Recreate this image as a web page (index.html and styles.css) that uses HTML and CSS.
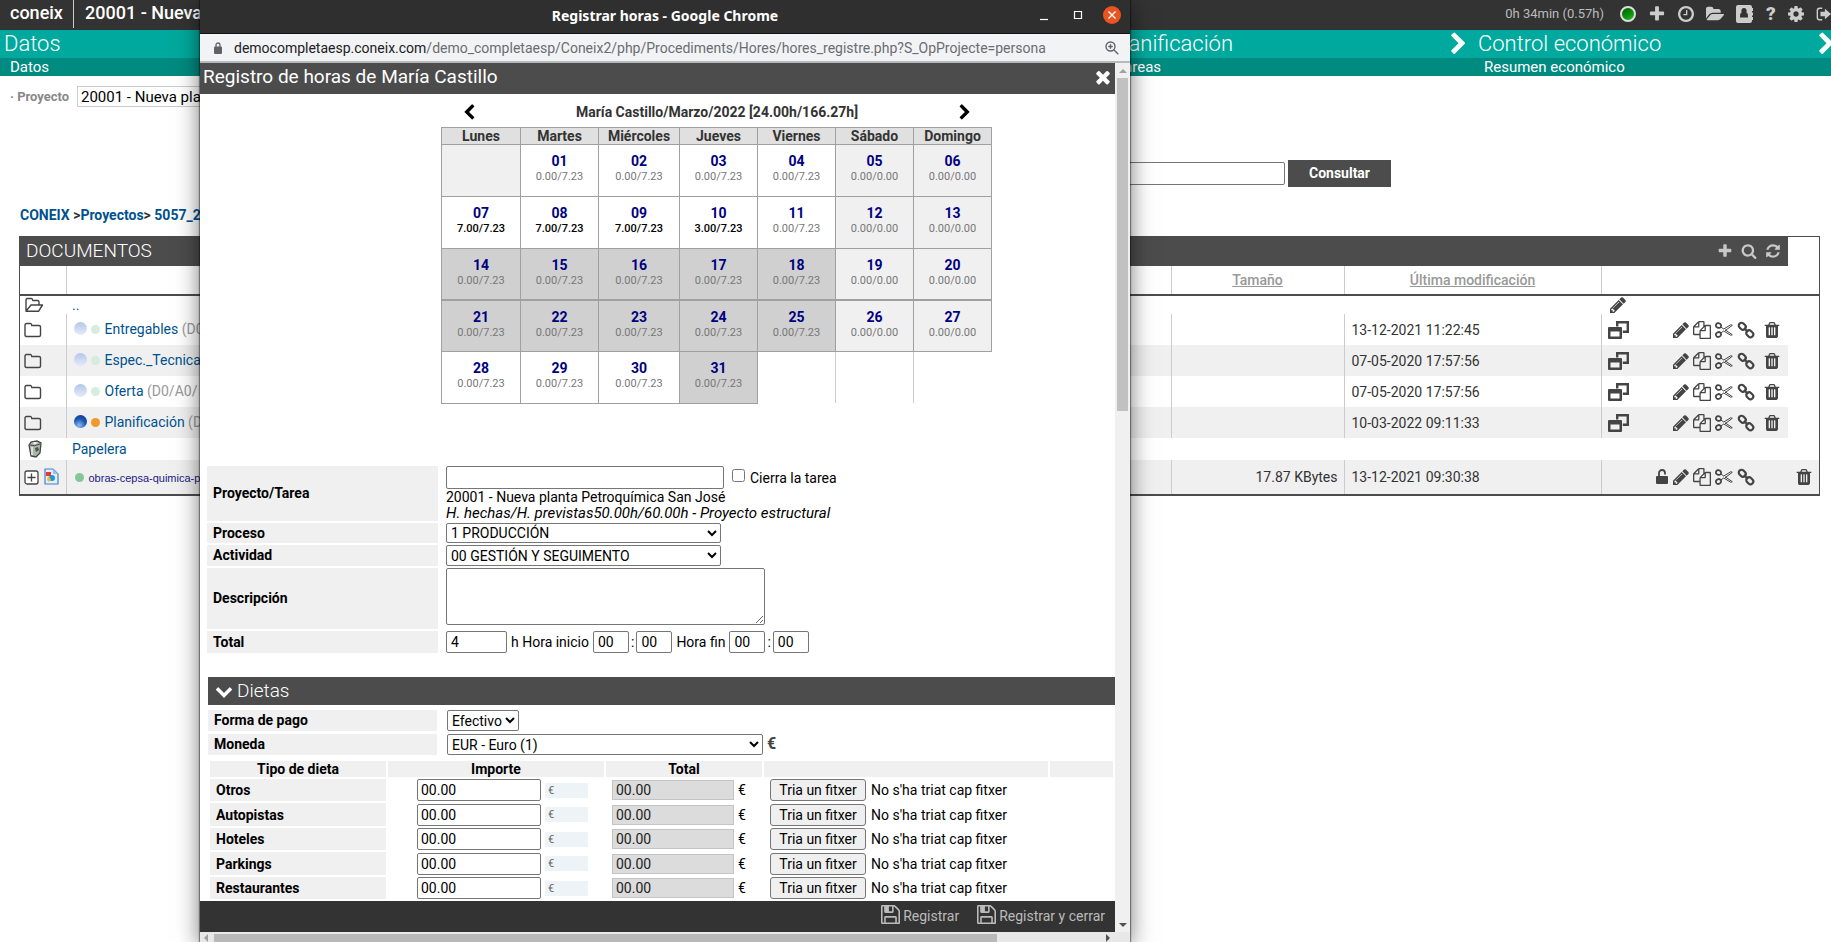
FILE: index.html
```html
<!DOCTYPE html>
<html lang="es">
<head>
<meta charset="utf-8">
<title>coneix - Registro de horas</title>
<link rel="stylesheet" href="styles.css">
</head>
<body>
<svg class="sprite" aria-hidden="true">
  <symbol id="plus" viewBox="0 0 1792 1792"><path d="M1600 736v192q0 40-28 68t-68 28h-416v416q0 40-28 68t-68 28h-192q-40 0-68-28t-28-68v-416h-416q-40 0-68-28t-28-68v-192q0-40 28-68t68-28h416v-416q0-40 28-68t68-28h192q40 0 68 28t28 68v416h416q40 0 68 28t28 68z"/></symbol>
  <symbol id="right" viewBox="256 0 1200 1792"><path d="M1363 877l-742 742q-19 19-45 19t-45-19l-166-166q-19-19-19-45t19-45l531-531-531-531q-19-19-19-45t19-45l166-166q19-19 45-19t45 19l742 742q19 19 19 45t-19 45z"/></symbol>
  <symbol id="left" viewBox="336 0 1200 1792"><path d="M1427 301l-531 531 531 531q19 19 19 45t-19 45l-166 166q-19 19-45 19t-45-19l-742-742q-19-19-19-45t19-45l742-742q19-19 45-19t45 19l166 166q19 19 19 45t-19 45z"/></symbol>
  <symbol id="down" viewBox="0 0 1792 1792"><path d="M1683 808l-742 741q-19 19-45 19t-45-19l-742-741q-19-19-19-45.500t19-45.500l166-165q19-19 45-19t45 19l531 531 531-531q19-19 45-19t45 19l166 165q19 19 19 45.500t-19 45.500z"/></symbol>
  <symbol id="times" viewBox="192 192 1408 1408"><path d="M1490 1322q0 40-28 68l-136 136q-28 28-68 28t-68-28l-294-294-294 294q-28 28-68 28t-68-28l-136-136q-28-28-28-68t28-68l294-294-294-294q-28-28-28-68t28-68l136-136q28-28 68-28t68 28l294 294 294-294q28-28 68-28t68 28l136 136q28 28 28 68t-28 68l-294 294 294 294q28 28 28 68z"/></symbol>
  <symbol id="search" viewBox="0 0 1792 1792"><path d="M1216 832q0-185-131.500-316.500t-316.500-131.500-316.500 131.500-131.500 316.500 131.500 316.500 316.500 131.500 316.500-131.500 131.500-316.500zm512 832q0 52-38 90t-90 38q-54 0-90-38l-343-342q-179 124-399 124-143 0-273.500-55.500t-225-150-150-225-55.500-273.500 55.500-273.500 150-225 225-150 273.500-55.500 273.500 55.500 225 150 150 225 55.500 273.500q0 220-124 399l343 343q37 37 37 90z"/></symbol>
  <symbol id="refresh" viewBox="0 0 1792 1792"><path d="M1639 1056q0 5-1 7-64 268-268 434.500t-478 166.500q-146 0-282.500-55t-243.500-157l-129 129q-19 19-45 19t-45-19-19-45v-448q0-26 19-45t45-19h448q26 0 45 19t19 45-19 45l-137 137q71 66 161 102t187 36q134 0 250-65t186-179q11-17 53-117 8-23 30-23h192q13 0 22.500 9.500t9.500 22.500zm25-800v448q0 26-19 45t-45 19h-448q-26 0-45-19t-19-45 19-45l138-138q-148-137-349-137-134 0-250 65t-186 179q-11 17-53 117-8 23-30 23h-199q-13 0-22.500-9.500t-9.500-22.500v-7q65-268 270-434.500t480-166.500q146 0 284 55.500t245 156.500l130-129q19-19 45-19t45 19 19 45z"/></symbol>
  <symbol id="pencil" viewBox="128 128 1536 1536"><path d="M491 1536l91-91-235-235-91 91v107h128v128h107zm523-928q0-22-22-22-10 0-17 7l-542 542q-7 7-7 17 0 22 22 22 10 0 17-7l542-542q7-7 7-17zm-54-192l416 416-832 832h-416v-416zm683 96q0 53-37 90l-166 166-416-416 166-165q36-38 90-38 53 0 91 38l235 234q37 39 37 91z"/></symbol>
  <symbol id="trash" viewBox="128 128 1536 1536"><path d="M704 1376v-704q0-14-9-23t-23-9h-64q-14 0-23 9t-9 23v704q0 14 9 23t23 9h64q14 0 23-9t9-23zm256 0v-704q0-14-9-23t-23-9h-64q-14 0-23 9t-9 23v704q0 14 9 23t23 9h64q14 0 23-9t9-23zm256 0v-704q0-14-9-23t-23-9h-64q-14 0-23 9t-9 23v704q0 14 9 23t23 9h64q14 0 23-9t9-23zm-544-992h448l-48-117q-7-9-17-11h-317q-10 2-17 11zm928 32v64q0 14-9 23t-23 9h-96v948q0 83-47 143.500t-113 60.500h-832q-66 0-113-58.500t-47-141.500v-952h-96q-14 0-23-9t-9-23v-64q0-14 9-23t23-9h309l70-167q15-37 54-63t79-26h320q40 0 79 26t54 63l70 167h309q14 0 23 9t9 23z"/></symbol>
  <symbol id="cog" viewBox="128 128 1536 1536"><path d="M1152 896q0-106-75-181t-181-75-181 75-75 181 75 181 181 75 181-75 75-181zm512-109v222q0 12-8 23t-20 13l-185 28q-19 54-39 91 35 50 107 138 10 12 10 25t-9 23q-27 37-99 108t-94 71q-12 0-26-9l-138-108q-44 23-91 38-16 136-29 186-7 28-36 28h-222q-14 0-24.500-8.500t-11.500-21.500l-28-184q-49-16-90-37l-141 107q-10 9-25 9-14 0-25-11-126-114-165-168-7-10-7-23 0-12 8-23 15-21 51-66.500t54-70.500q-27-50-41-99l-183-27q-13-2-21-12.500t-8-23.500v-222q0-12 8-23t19-13l186-28q14-46 39-92-40-57-107-138-10-12-10-24 0-10 9-23 26-36 98.500-107.500t94.500-71.500q13 0 26 10l138 107q44-23 91-38 16-136 29-186 7-28 36-28h222q14 0 24.500 8.500t11.500 21.500l28 184q49 16 90 37l142-107q9-9 24-9 13 0 25 10 129 119 165 170 7 8 7 22 0 12-8 23-15 21-51 66.500t-54 70.500q26 50 41 98l183 28q13 2 21 12.500t8 23.500z"/></symbol>
  <symbol id="clock" viewBox="128 128 1536 1536"><path d="M1024 544v448q0 14-9 23t-23 9h-320q-14 0-23-9t-9-23v-64q0-14 9-23t23-9h224v-352q0-14 9-23t23-9h64q14 0 23 9t9 23zm416 352q0-148-73-273t-198-198-273-73-273 73-198 198-73 273 73 273 198 198 273 73 273-73 198-198 73-273zm224 0q0 209-103 385.500t-279.500 279.500-385.500 103-385.500-103-279.500-279.500-103-385.500 103-385.500 279.500-279.500 385.500-103 385.500 103 279.500 279.500 103 385.500z"/></symbol>
  <symbol id="open" viewBox="0 128 1880 1536"><path d="M1879 952q0 31-31 66l-336 396q-43 51-120.500 86.500t-143.500 35.500h-1088q-34 0-60.500-13t-26.500-43q0-31 31-66l336-396q43-51 120.500-86.500t143.500-35.500h1088q34 0 60.500 13t26.500 43zm-343-344v160h-832q-94 0-197 47.500t-164 119.500l-337 396-6 6v-985q0-92 66-158t158-66h320q92 0 158 66t66 158v32h544q92 0 158 66t66 158z"/></symbol>
  <symbol id="copy" viewBox="0 0 1792 1792"><path d="M1696 384q40 0 68 28t28 68v1216q0 40-28 68t-68 28h-960q-40 0-68-28t-28-68v-288h-544q-40 0-68-28t-28-68v-672q0-40 20-88t48-76l408-408q28-28 76-48t88-20h416q40 0 68 28t28 68v328q68-40 128-40h416zm-544 213l-299 299h299v-299zm-640-384l-299 299h299v-299zm196 647l316-316v-416h-384v416q0 40-28 68t-68 28h-416v640h512v-256q0-40 20-88t48-76zm956 804v-1152h-384v416q0 40-28 68t-68 28h-416v640h896z"/></symbol>
  <symbol id="save" viewBox="128 128 1536 1536"><path d="M512 1536h768v-384h-768v384zm896 0h128v-896q0-14-10-38.500t-20-34.500l-281-281q-10-10-34-20t-39-10v416q0 40-28 68t-68 28h-576q-40 0-68-28t-28-68v-416h-128v1280h128v-416q0-40 28-68t68-28h832q40 0 68 28t28 68v416zm-384-928v-320q0-13-9.500-22.500t-22.500-9.500h-192q-13 0-22.500 9.500t-9.500 22.500v320q0 13 9.500 22.500t22.500 9.500h192q13 0 22.500-9.500t9.500-22.500zm640 32v928q0 40-28 68t-68 28h-1344q-40 0-68-28t-28-68v-1344q0-40 28-68t68-28h928q40 0 88 20t76 48l280 280q28 28 48 76t20 88z"/></symbol>
  <symbol id="cut" viewBox="0 0 18 18"><g fill="none" stroke="currentColor"><ellipse cx="3.500" cy="4.500" rx="2.600" ry="2.300" stroke-width="1.700" transform="rotate(30 3.500 4.500)"/><ellipse cx="3.500" cy="13.500" rx="2.600" ry="2.300" stroke-width="1.700" transform="rotate(-30 3.500 13.500)"/><path d="M5.800 6l3 2 7-4.300 1.500.6-7.300 5.500M5.800 12l3-2M10 8.700l7.300 5-1.500.6-7-4.300" stroke-width="1"/></g></symbol>
  <symbol id="link" viewBox="0 0 18 18"><g fill="none" stroke="currentColor" stroke-width="2.200"><rect x="1.500" y="2.500" width="7.500" height="5.500" rx="2.700" transform="rotate(45 5.250 5.250)"/><rect x="9" y="10" width="7.500" height="5.500" rx="2.700" transform="rotate(45 12.750 12.750)"/><path d="M7 7l4 4"/></g></symbol>
  <symbol id="windows" viewBox="0 0 21 18"><path d="M9.200 5.500V1.200h10.600v9.600h-5" fill="none" stroke="currentColor" stroke-width="2.400"/><path fill-rule="evenodd" d="M1 6h12q1 0 1 1v10q0 1-1 1H1q-1 0-1-1V7q0-1 1-1zM2.500 10.500v5h9v-5z"/></symbol>
  <symbol id="unlock" viewBox="0 0 14 18"><path d="M2 8h10q1 0 1 1v6q0 1-1 1H2q-1 0-1-1V9q0-1 1-1z"/><path d="M4 9V5a3 3 0 0 1 6 0v1.500" fill="none" stroke="currentColor" stroke-width="1.800"/></symbol>
  <symbol id="folder" viewBox="0 0 18 16"><path d="M1 3q0-1.500 1.500-1.500h4q1 0 1.300 2H15Q16.500 3.500 16.500 5v8q0 1.500-1.500 1.500H2.500Q1 14.500 1 13z" fill="none" stroke="currentColor" stroke-width="1.400"/></symbol>
  <symbol id="folderopen" viewBox="0 0 20 16"><path d="M2 14V3q0-1.500 1.500-1.500h4q1 0 1.300 2h4.700Q15 3.500 15 5v2.500M2 14.300h12.500l4-6.300H7z" fill="none" stroke="currentColor" stroke-width="1.400" stroke-linejoin="round"/></symbol>
  <symbol id="book" viewBox="0 0 18 18"><path fill-rule="evenodd" d="M2 0h12q2 0 2 2v1h1v3h-1v1.500h1v3h-1V12h1v3h-1v1q0 2-2 2H2q-2 0-2-2V2q0-2 2-2zm6 3a2.600 2.800 0 0 0-2.300 4.300Q4 8 4 11v1.500h8V11q0-3-1.700-3.700A2.600 2.800 0 0 0 8 3z"/></symbol>
  <symbol id="exit" viewBox="0 0 18 16"><path d="M7 1.500H4Q1.500 1.500 1.500 4v8q0 2.500 2.500 2.500h3" fill="none" stroke="currentColor" stroke-width="1.600"/><path d="M5 5.500h5V2l7 6-7 6v-3.500H5z"/></symbol>
</svg>

<div class="app">
  <header class="topbar">
    <a class="brand" href="#">coneix</a>
    <h1 class="project">20001 - Nueva</h1>
    <div class="tools">
      <span class="clocked">0h 34min (0.57h)</span>
      <span class="light"></span>
      <a href="#" aria-label="Añadir"><svg class="i18"><use href="#plus"/></svg></a>
      <a href="#" aria-label="Horas"><svg class="i16"><use href="#clock"/></svg></a>
      <a href="#" aria-label="Carpetas"><svg class="i18"><use href="#open"/></svg></a>
      <a href="#" aria-label="Contactos"><svg class="i18"><use href="#book"/></svg></a>
      <a href="#" class="help">?</a>
      <a href="#" aria-label="Ajustes"><svg class="i16"><use href="#cog"/></svg></a>
      <a href="#" aria-label="Salir"><svg class="i16"><use href="#exit"/></svg></a>
    </div>
  </header>

  <nav class="steps">
    <div class="step first"><a class="phase" href="#">Datos</a><a class="sub" href="#">Datos</a></div>
    <div class="step"><span class="phase"></span><span class="sub"></span></div>
    <div class="step"><span class="phase"></span><span class="sub"></span></div>
    <div class="step"><a class="phase" href="#">Planificación<svg class="next"><use href="#right"/></svg></a><a class="sub" href="#">Tareas</a></div>
    <div class="step"><a class="phase" href="#">Control económico<svg class="next"><use href="#right"/></svg></a><a class="sub" href="#">Resumen económico</a></div>
  </nav>

  <main class="page">
    <div class="project-row">
      <label for="proj">· Proyecto</label>
      <input id="proj" value="20001 - Nueva planta">
    </div>
    <div class="query">
      <input aria-label="Buscar"><button>Consultar</button>
    </div>
    <div class="crumbs"><a href="#">CONEIX</a> &gt;<a href="#">Proyectos</a>&gt; <a href="#">5057_2</a></div>

    <section class="docs">
      <div class="docs-head">
        <h2>DOCUMENTOS</h2>
        <a href="#" aria-label="Añadir"><svg class="i16"><use href="#plus"/></svg></a>
        <a href="#" aria-label="Buscar"><svg class="i16"><use href="#search"/></svg></a>
        <a href="#" aria-label="Refrescar"><svg class="i16"><use href="#refresh"/></svg></a>
      </div>
      <table class="files">
        <colgroup><col class="c-icon"><col><col class="c-size"><col class="c-date"><col class="c-act"><col class="c-del"></colgroup>
        <thead><tr><th></th><th></th><th><a href="#">Tamaño</a></th><th><a href="#">Última modificación</a></th><th></th><th class="off"></th></tr></thead>
        <tbody>
          <tr class="up"><td><svg class="fo"><use href="#folderopen"/></svg></td><td><a href="#">..</a></td><td></td><td></td><td><svg class="i16 only"><use href="#pencil"/></svg></td><td></td></tr>
          <tr class="dir"><td><svg class="fd"><use href="#folder"/></svg></td><td><i class="ball"></i><i class="dot"></i><a href="#">Entregables</a> (D0/A0/</td><td></td><td>13-12-2021 11:22:45</td><td><div class="acts"><svg class="win"><use href="#windows"/></svg><svg class="i16"><use href="#pencil"/></svg><svg class="i18"><use href="#copy"/></svg><svg class="i18"><use href="#cut"/></svg><svg class="i18"><use href="#link"/></svg><svg class="i16 del"><use href="#trash"/></svg></div></td><td class="off"></td></tr>
          <tr class="dir alt"><td><svg class="fd"><use href="#folder"/></svg></td><td><i class="ball"></i><i class="dot"></i><a href="#">Espec._Tecnicas</a></td><td></td><td>07-05-2020 17:57:56</td><td><div class="acts"><svg class="win"><use href="#windows"/></svg><svg class="i16"><use href="#pencil"/></svg><svg class="i18"><use href="#copy"/></svg><svg class="i18"><use href="#cut"/></svg><svg class="i18"><use href="#link"/></svg><svg class="i16 del"><use href="#trash"/></svg></div></td><td class="off"></td></tr>
          <tr class="dir"><td><svg class="fd"><use href="#folder"/></svg></td><td><i class="ball"></i><i class="dot"></i><a href="#">Oferta</a> (D0/A0/</td><td></td><td>07-05-2020 17:57:56</td><td><div class="acts"><svg class="win"><use href="#windows"/></svg><svg class="i16"><use href="#pencil"/></svg><svg class="i18"><use href="#copy"/></svg><svg class="i18"><use href="#cut"/></svg><svg class="i18"><use href="#link"/></svg><svg class="i16 del"><use href="#trash"/></svg></div></td><td class="off"></td></tr>
          <tr class="dir alt"><td><svg class="fd"><use href="#folder"/></svg></td><td><i class="ball on"></i><i class="dot warn"></i><a href="#">Planificación</a> (D0/A0/</td><td></td><td>10-03-2022 09:11:33</td><td><div class="acts"><svg class="win"><use href="#windows"/></svg><svg class="i16"><use href="#pencil"/></svg><svg class="i18"><use href="#copy"/></svg><svg class="i18"><use href="#cut"/></svg><svg class="i18"><use href="#link"/></svg><svg class="i16 del"><use href="#trash"/></svg></div></td><td class="off"></td></tr>
          <tr class="bin"><td><svg class="binicon" viewBox="0 0 16 18"><path d="M2 5l2-3 6-1 4 2-1 10-4 4-5-1z" fill="#aab5ab" stroke="#444" stroke-width="1.300"/><path d="M3 5q4 2 10-1" stroke="#444" fill="none"/><path d="M5 3l3-1 3 1-3 1z" fill="#fff"/><path d="M8 8l3-1 1 3-3 2z" fill="#3f5a49"/><path d="M5 7v8" stroke="#eee" stroke-width="1.500"/></svg></td><td><a href="#">Papelera</a></td><td></td><td></td><td></td><td></td></tr>
          <tr class="file alt"><td><svg class="fileicons" viewBox="0 0 36 18"><rect x="1" y="3" width="13" height="13" rx="2" fill="#fff" stroke="#444" stroke-width="1.300"/><path d="M7.500 5.500v8M3.500 9.500h8" stroke="#444" stroke-width="1.300"/><path d="M21 1h8l5 5v10H21z" fill="#e3eefc" stroke="#4a7fc8" stroke-width="1.200"/><path d="M29 1v5h5" fill="#9cc0ee"/><path d="M22 4h5v4h-5z" fill="#e33"/><circle cx="28" cy="10" r="3" fill="#1899d6"/><path d="M24 8l3 3-2 3-2-2z" fill="#f4b82a"/></svg></td><td><i class="dot good"></i><a class="fname" href="#">obras-cepsa-quimica-pa</a></td><td class="num">17.87 KBytes</td><td>13-12-2021 09:30:38</td><td><div class="acts"><svg class="lock"><use href="#unlock"/></svg><svg class="i16"><use href="#pencil"/></svg><svg class="i18"><use href="#copy"/></svg><svg class="i18"><use href="#cut"/></svg><svg class="i18"><use href="#link"/></svg></div></td><td><svg class="i16"><use href="#trash"/></svg></td></tr>
        </tbody>
      </table>
    </section>
  </main>
</div>

<section class="window" aria-label="Registrar horas">
  <header class="titlebar">
    <span class="wtitle">Registrar horas - Google Chrome</span>
    <div class="wbtns">
      <button aria-label="Minimizar"><svg viewBox="0 0 18 18"><path d="M5 13.500h8" stroke="#fff" stroke-width="1.200"/></svg></button>
      <button aria-label="Maximizar"><svg viewBox="0 0 18 18"><path d="M5.500 5.500h7v7h-7z" fill="none" stroke="#fff" stroke-width="1.200"/></svg></button>
      <button aria-label="Cerrar ventana"><svg viewBox="0 0 18 18"><circle cx="9" cy="9" r="9" fill="#e95420"/><path d="M5.500 5.500l7 7m0-7l-7 7" stroke="#fff" stroke-width="1.400"/></svg></button>
    </div>
  </header>
  <div class="urlbar">
    <svg class="padlock" viewBox="0 0 10 12"><rect x="1" y="4.500" width="8" height="7.500" rx="1" fill="#5f6368"/><path d="M3 5V3a2 2 0 0 1 4 0v2" fill="none" stroke="#5f6368" stroke-width="1.300"/></svg>
    <span class="url"><b>democompletaesp.coneix.com</b>/demo_completaesp/Coneix2/php/Procediments/Hores/hores_registre.php?S_OpProjecte=persona</span>
    <svg class="lens" viewBox="0 0 14 14"><g fill="none" stroke="#5f6368" stroke-width="1.400"><circle cx="5.500" cy="5.500" r="4.500"/><path d="M9 9l4.300 4.300M3.300 5.500h4.400M5.500 3.300v4.400"/></g></svg>
  </div>

  <div class="view">
    <div class="content">
      <div class="dlg-head"><h2>Registro de horas de María Castillo</h2><button aria-label="Cerrar"><svg><use href="#times"/></svg></button></div>
      <div class="scroller">
        <div class="month">
          <button aria-label="Mes anterior"><svg><use href="#left"/></svg></button>
          <span>María Castillo/Marzo/2022 [24.00h/166.27h]</span>
          <button aria-label="Mes siguiente"><svg><use href="#right"/></svg></button>
        </div>
        <table class="cal">
          <thead><tr><th class="mon">Lunes</th><th>Martes</th><th class="wide">Miércoles</th><th>Jueves</th><th>Viernes</th><th>Sábado</th><th>Domingo</th></tr></thead>
          <tbody>
            <tr><td class="we"></td><td><a href="#">01</a>0.00/7.23</td><td><a href="#">02</a>0.00/7.23</td><td><a href="#">03</a>0.00/7.23</td><td><a href="#">04</a>0.00/7.23</td><td class="we"><a href="#">05</a>0.00/0.00</td><td class="we"><a href="#">06</a>0.00/0.00</td></tr>
            <tr><td class="done"><a href="#">07</a>7.00/7.23</td><td class="done"><a href="#">08</a>7.00/7.23</td><td class="done"><a href="#">09</a>7.00/7.23</td><td class="done"><a href="#">10</a>3.00/7.23</td><td><a href="#">11</a>0.00/7.23</td><td class="we"><a href="#">12</a>0.00/0.00</td><td class="we"><a href="#">13</a>0.00/0.00</td></tr>
            <tr class="mid"><td class="off"><a href="#">14</a>0.00/7.23</td><td class="off"><a href="#">15</a>0.00/7.23</td><td class="off"><a href="#">16</a>0.00/7.23</td><td class="off"><a href="#">17</a>0.00/7.23</td><td class="off"><a href="#">18</a>0.00/7.23</td><td class="we"><a href="#">19</a>0.00/0.00</td><td class="we"><a href="#">20</a>0.00/0.00</td></tr>
            <tr><td class="off"><a href="#">21</a>0.00/7.23</td><td class="off"><a href="#">22</a>0.00/7.23</td><td class="off"><a href="#">23</a>0.00/7.23</td><td class="off"><a href="#">24</a>0.00/7.23</td><td class="off"><a href="#">25</a>0.00/7.23</td><td class="we"><a href="#">26</a>0.00/0.00</td><td class="we"><a href="#">27</a>0.00/0.00</td></tr>
            <tr><td><a href="#">28</a>0.00/7.23</td><td><a href="#">29</a>0.00/7.23</td><td><a href="#">30</a>0.00/7.23</td><td class="off"><a href="#">31</a>0.00/7.23</td><td class="none"></td><td class="none"></td><td class="none last"></td></tr>
          </tbody>
        </table>

        <div class="form">
          <label class="lab tall" for="task">Proyecto/Tarea</label>
          <div class="fld block">
            <div class="line"><input id="task" class="task"><input type="checkbox" id="close"><label for="close">Cierra la tarea</label></div>
            <div>20001 - Nueva planta Petroquímica San José</div>
            <div class="plan"><em>H. hechas/H. previstas50.00h/60.00h - Proyecto estructural</em></div>
          </div>
          <label class="lab" for="proc">Proceso</label>
          <div class="fld"><select id="proc" class="sel"><option>1 PRODUCCIÓN</option></select></div>
          <label class="lab" for="act">Actividad</label>
          <div class="fld"><select id="act" class="sel"><option>00 GESTIÓN Y SEGUIMENTO</option></select></div>
          <label class="lab area" for="desc">Descripción</label>
          <div class="fld"><textarea id="desc"></textarea></div>
          <label class="lab" for="tot">Total</label>
          <div class="fld times"><input id="tot" class="tot" value="4"><span>h Hora inicio</span><input aria-label="Hora inicio" value="00"><span class="colon">:</span><input aria-label="Minuto inicio" value="00"><span class="fin">Hora fin</span><input aria-label="Hora fin" value="00"><span class="colon">:</span><input aria-label="Minuto fin" value="00"></div>
        </div>

        <h3 class="diet-head"><svg><use href="#down"/></svg>Dietas</h3>
        <div class="form diet">
          <label class="lab" for="pay">Forma de pago</label>
          <div class="fld"><select id="pay"><option>Efectivo</option></select></div>
          <label class="lab" for="cur">Moneda</label>
          <div class="fld"><select id="cur" class="cur"><option>EUR - Euro (1)</option></select><span class="euro">€</span></div>
        </div>
        <table class="exp">
          <colgroup><col class="e1"><col class="e2"><col class="e3"><col class="e4"><col></colgroup>
          <thead><tr><th>Tipo de dieta</th><th>Importe</th><th>Total</th><th></th><th></th></tr></thead>
          <tbody>
            <tr><th>Otros</th><td><div class="amt"><input aria-label="Importe otros" value="00.00"><span>€</span></div></td><td><div class="sum"><input aria-label="Total otros" value="00.00" disabled>€</div></td><td><button>Tria un fitxer</button>No s'ha triat cap fitxer</td><td></td></tr>
            <tr><th>Autopistas</th><td><div class="amt"><input aria-label="Importe autopistas" value="00.00"><span>€</span></div></td><td><div class="sum"><input aria-label="Total autopistas" value="00.00" disabled>€</div></td><td><button>Tria un fitxer</button>No s'ha triat cap fitxer</td><td></td></tr>
            <tr><th>Hoteles</th><td><div class="amt"><input aria-label="Importe hoteles" value="00.00"><span>€</span></div></td><td><div class="sum"><input aria-label="Total hoteles" value="00.00" disabled>€</div></td><td><button>Tria un fitxer</button>No s'ha triat cap fitxer</td><td></td></tr>
            <tr><th>Parkings</th><td><div class="amt"><input aria-label="Importe parkings" value="00.00"><span>€</span></div></td><td><div class="sum"><input aria-label="Total parkings" value="00.00" disabled>€</div></td><td><button>Tria un fitxer</button>No s'ha triat cap fitxer</td><td></td></tr>
            <tr><th>Restaurantes</th><td><div class="amt"><input aria-label="Importe restaurantes" value="00.00"><span>€</span></div></td><td><div class="sum"><input aria-label="Total restaurantes" value="00.00" disabled>€</div></td><td><button>Tria un fitxer</button>No s'ha triat cap fitxer</td><td></td></tr>
          </tbody>
        </table>
      </div>
      <footer class="actions">
        <button><svg><use href="#save"/></svg>Registrar</button>
        <button><svg><use href="#save"/></svg>Registrar y cerrar</button>
      </footer>
    </div>
    <div class="vbar"><i class="tri up"></i><i class="thumb"></i><i class="tri dn"></i></div>
  </div>
  <div class="hbar"><i class="tri lf"></i><i class="thumb"></i><i class="tri rt"></i></div>
</section>
</body>
</html>
```

FILE: styles.css
```css
* { box-sizing: border-box; }
html, body { height: 100%; margin: 0; }
body {
  position: relative;
  overflow: hidden;
  background: #fff;
  color: #333;
  font: 14px/16px Roboto, "Liberation Sans", sans-serif;
}
a { color: #00528e; text-decoration: none; }
h1, h2, h3 { margin: 0; }
button, input, select, textarea { font: inherit; color: #000; }
button { padding: 0; border: 0; background: none; cursor: pointer; }
svg { display: block; fill: currentColor; flex: none; }
.sprite { position: absolute; width: 0; height: 0; }
.i16 { width: 16px; height: 16px; }
.i18 { width: 18px; height: 18px; }

/* Application behind the window */
.topbar {
  display: flex;
  align-items: flex-start;
  height: 30px;
  background: #333;
  color: #fff;
  padding-left: 10px;
  overflow: hidden;
}
.brand { color: #fff; font-size: 18px; font-weight: 500; width: 64px; line-height: 26px; height: 28px; border-right: 1px solid #ccc; }
.project { font-size: 18px; font-weight: 500; margin-left: 11px; line-height: 26px; }
.tools { display: flex; align-items: center; gap: 12px; height: 28px; margin: 0 -1px 0 auto; color: #bbb; }
.tools a { color: #ccc; }
.clocked { font-size: 13px; margin-right: 4px; }
.light { width: 16px; height: 16px; border: 2px solid #ddd; border-radius: 50%; background: linear-gradient(150deg, #006000, #0a8a0a 50%, #1fc01f); }
.help { font-size: 19px; font-weight: 900; width: 10px; }

.steps { display: grid; grid-template-columns: 1fr repeat(4, 368px); margin-right: -3px; }
.phase { display: flex; justify-content: space-between; align-items: center; height: 28px; background: #00a99d; color: #fff; font-size: 22px; line-height: 28px; font-weight: 300; padding-left: 12px; }
.sub { display: block; height: 18px; line-height: 18px; background: #008b80; color: #fff; font-size: 15px; padding-left: 18px; }
.first .phase { padding-left: 4px; }
.first .sub { padding-left: 10px; }
.next { width: 16px; height: 24px; }

.page { padding: 10px 11px 0 19px; }
.project-row { display: flex; align-items: center; height: 21px; margin-left: -9px; color: #888; }
.project-row label { width: 67px; font-size: 13px; font-weight: 700; }
.project-row input { width: 300px; height: 21px; border: 1px solid #ccc; padding: 0 3px; font-size: 15px; }
.query { display: flex; align-items: center; gap: 3px; width: 672px; height: 27px; margin: 53px 0 0 700px; }
.query input { flex: 1; height: 23px; border: 1px solid #767676; border-radius: 2px; }
.query button { width: 103px; height: 27px; padding-bottom: 2px; background: #4c4c4c; color: #fff; font-weight: 700; }
.crumbs { margin: 20px 0 12px 1px; line-height: 17px; font-weight: 700; }

.docs { border: 1px solid #4c4c4c; border-bottom-width: 2px; }
.docs-head { display: flex; align-items: center; gap: 8px; height: 29px; margin-right: 31px; padding: 0 7px 1px 6px; background: #4c4c4c; }
.docs-head h2 { flex: 1; color: #fff; font-size: 19px; font-weight: 300; }
.docs-head a { color: #c8c8c8; }
.files { width: 100%; table-layout: fixed; border-collapse: collapse; color: #333; }
.files th, .files td { padding: 0 4px; text-align: left; overflow: hidden; white-space: nowrap; }
.c-icon { width: 46px; }
.c-size { width: 173px; }
.c-date { width: 257px; }
.c-act { width: 187px; }
.c-del { width: 31px; }
.files thead tr { height: 29px; border-bottom: 2px solid #4c4c4c; }
.files thead th { text-align: center; font-weight: 500; }
.files thead a { color: #999; text-decoration: underline; }
.files .up { height: 19px; }
.files .dir { height: 31px; }
.files .bin { height: 22px; }
.files .file { height: 34px; }
.files .alt td { background: #f0f0f0; }
.files .alt td.off { background: #fff; }
.files thead th + th, .dir td + td, .file td + td { border-left: 1px solid #ccc; }
.files td.off, .files thead th.off, .file td:last-child { border-left: 0; }
.dir td:nth-child(2) { color: #999; }
.dir td:nth-child(4), .file td:nth-child(4) { padding-left: 7px; }
.files .num { text-align: right; padding-right: 6px; }
.files .file td:last-child { padding: 0 0 0 8px; }
.fd { width: 18px; height: 16px; }
.fo { width: 20px; height: 16px; }
.binicon { width: 16px; height: 18px; margin-left: 3px; }
.fileicons { width: 36px; height: 18px; }
.only { margin-left: 5px; }
.files svg { color: #444; }
.acts { display: flex; align-items: center; justify-content: flex-end; gap: 4px; padding-right: 29px; }
.dir .acts { padding-right: 4px; }
.acts .win { width: 21px; height: 18px; margin: 0 auto 0 2px; }
.acts .lock { width: 14px; height: 18px; }
.acts .del { margin-left: 5px; }
.ball, .dot { display: inline-block; vertical-align: middle; border-radius: 50%; }
.ball { width: 13px; height: 13px; margin: 0 4px 3px 3px; background: linear-gradient(#b3c6ea, #e4ecf8); }
.ball.on { background: radial-gradient(circle at 40% 80%, #8bbdf0, #1c56b4 50%, #0c3585); }
.dot { width: 9px; height: 9px; margin: 0 5px 1px 0; background: #d6ecdc; }
.dot.warn { background: #ee9a2c; }
.dot.good { background: #82c795; margin-left: 4px; }
.up td:nth-child(2), .bin td:nth-child(2) { padding-left: 6px; }
.fname { font: 11px "Liberation Sans", Arial, sans-serif; color: #1a1a80; }

/* Floating browser window */
.window {
  position: absolute;
  top: 0;
  bottom: 0;
  left: 200px;
  width: 930px;
  display: flex;
  flex-direction: column;
  background: #fff;
  color: #000;
  box-shadow: 0 0 1px 1px rgba(0, 0, 0, .4), 0 4px 22px rgba(0, 0, 0, .55);
}
.titlebar { display: grid; grid-template-columns: 110px 1fr 110px; height: 34px; flex: none; background: #302f30; border-bottom: 1px solid #111; color: #fff; align-items: center; }
.wtitle { grid-column: 2; text-align: center; font: 700 14px/20px "Noto Sans", "Open Sans", sans-serif; padding-bottom: 2px; }
.wbtns { display: flex; gap: 16px; justify-content: flex-end; padding: 0 9px 3px 0; }
.wbtns svg { width: 18px; height: 18px; }
.urlbar { display: flex; align-items: center; height: 29px; flex: none; padding: 0 11px 0 13px; background: #f2f3f5; border-bottom: 2px solid #b8b9bb; }
.padlock { width: 10px; height: 12px; }
.url { flex: 1; margin-left: 11px; font-size: 14px; line-height: 20px; color: #6a6d70; white-space: nowrap; }
.url b { font-weight: 400; color: #202124; }
.lens { width: 14px; height: 14px; }
.view { display: flex; flex: 1; min-height: 0; }
.content { display: flex; flex-direction: column; flex: 1; min-width: 0; }
.dlg-head { display: flex; align-items: center; justify-content: space-between; height: 31px; flex: none; padding: 0 4px 3px 3px; background: #4c4c4c; color: #fff; }
.dlg-head h2 { font-size: 19px; font-weight: 400; }
.dlg-head button { color: #fff; }
.dlg-head svg { width: 16px; height: 16px; }
.scroller { flex: 1; min-height: 0; overflow: hidden; }
.month { display: flex; align-items: center; justify-content: space-between; width: 510px; height: 24px; margin: 6px 0 3px 262px; color: #333; font-weight: 700; }
.month svg { width: 15px; height: 17px; color: #000; }

.cal { width: 551px; margin-left: 241px; border-collapse: collapse; table-layout: fixed; text-align: center; }
.cal th { height: 17px; padding: 0; border: 1px solid #a0a0a0; background: #e0e0e0; color: #333; font-weight: 700; width: 78px; }
.cal .mon { width: 79px; }
.cal .wide { width: 81px; }
.cal td { height: 52px; padding: 8px 0 0; border: 1px solid #a0a0a0; vertical-align: top; color: #777; font-size: 11px; line-height: 13px; }
.cal td a { display: block; font-size: 14px; line-height: 17px; font-weight: 700; color: #000080; }
.cal td.we { background: #f0f0f0; }
.cal td.off { background: #d0d0d0; }
.cal td.done { color: #000; font-weight: 500; }
.cal .mid td { height: 51px; border-bottom-width: 2px; }
.cal td.none { border-color: #a0a0a0 #ccc #fff; }
.cal td.last { border-right-color: #fff; }

.form { display: grid; grid-template-columns: 231px 1fr; column-gap: 8px; row-gap: 2px; margin: 62px 0 0 7px; }
.lab { display: flex; align-items: center; min-height: 20px; padding: 0 6px 1px; background: #f0f0f0; font-weight: 700; }
.tall { min-height: 55px; }
.area { min-height: 61px; }
.fld { display: flex; align-items: flex-start; }
.fld.block { display: block; height: 55px; }
.fld input, .fld textarea, .fld select { margin: 0; border: 1px solid #767676; border-radius: 2px; background: #fff; }
.line { display: flex; align-items: center; height: 23px; }
.plan { font-size: 15px; }
.fld .task { width: 278px; height: 23px; }
.line input[type="checkbox"] { width: 13px; height: 13px; margin: 0 5px 4px 8px; }
.fld select { height: 21px; }
.fld .sel { width: 275px; }
.fld #proc { height: 20px; }
.fld textarea { width: 319px; height: 57px; }
.fld.times { align-items: center; height: 22px; }
.times input { width: 36px; height: 22px; padding: 0 4px; }
.times .tot { width: 61px; }
.times span { padding: 0 4px; }
.times .colon { padding: 0 2px; }
.diet-head { display: flex; align-items: center; gap: 4px; height: 28px; margin: 24px 0 0 8px; padding-left: 7px; background: #4c4c4c; color: #fff; font-size: 19px; font-weight: 300; }
.diet-head svg { width: 18px; height: 18px; }
.diet { grid-template-columns: 229px 1fr; column-gap: 10px; row-gap: 3px; margin: 5px 0 0 8px; }
.fld .cur { width: 316px; }
.euro { margin: 2px 0 0 4px; font-size: 16px; font-weight: 700; color: #444; }

.exp { width: calc(100% - 8px); margin: 4px 0 0 8px; table-layout: fixed; border-collapse: separate; border-spacing: 2px; }
.e1 { width: 176px; }
.e2 { width: 216px; }
.e3 { width: 156px; }
.e4 { width: 284px; }
.exp th { padding: 0 6px; background: #f0f0f0; font-weight: 700; }
.exp tbody th { text-align: left; }
.exp tbody tr { height: 22px; }
.exp tbody tr:nth-child(even) { height: 23px; }
.exp td { padding: 0 6px; white-space: nowrap; }
.exp input { height: 22px; padding: 0 3px; border: 1px solid #767676; border-radius: 2px; }
.exp td button { width: 96px; height: 22px; margin-right: 5px; border: 1px solid #767676; border-radius: 3px; background: #efefef; }
.amt { display: flex; align-items: center; gap: 4px; padding-left: 23px; }
.amt input { width: 124px; }
.amt span { width: 43px; height: 15px; padding-left: 3px; background: #edf3f6; color: #666; font-size: 11px; line-height: 15px; }
.sum { display: flex; align-items: center; gap: 4px; }
.exp .sum input { width: 122px; height: 20px; border: 1px solid #c4c4c4; border-radius: 0; background: #dcdcdc; color: #222; }

.actions { display: flex; justify-content: flex-end; align-items: center; gap: 18px; height: 31px; flex: none; padding: 0 10px 2px 0; background: #333; }
.actions button { display: flex; align-items: center; gap: 3px; color: #bbb; }
.actions svg { width: 19px; height: 19px; margin-bottom: 3px; }

.vbar { display: flex; flex-direction: column; align-items: center; width: 15px; padding: 6px 0 5px; background: #f0f0f0; }
.vbar .thumb { width: 11px; height: 333px; margin: 5px 0 auto; background: #c1c1c1; }
.hbar { display: flex; align-items: center; height: 10px; flex: none; padding: 2px 20px 0 4px; background: #e8e8e8; }
.hbar .thumb { width: 783px; height: 8px; margin: 0 auto 0 6px; background: #b9b9b9; }
.tri { width: 0; height: 0; border: 4px solid transparent; }
.tri.up { border-top: 0; border-bottom-color: #a0a0a0; }
.tri.dn { border-bottom: 0; border-top-color: #505050; }
.tri.lf { border-left: 0; border-right-color: #a0a0a0; }
.tri.rt { border-right: 0; border-left-color: #505050; }
```
